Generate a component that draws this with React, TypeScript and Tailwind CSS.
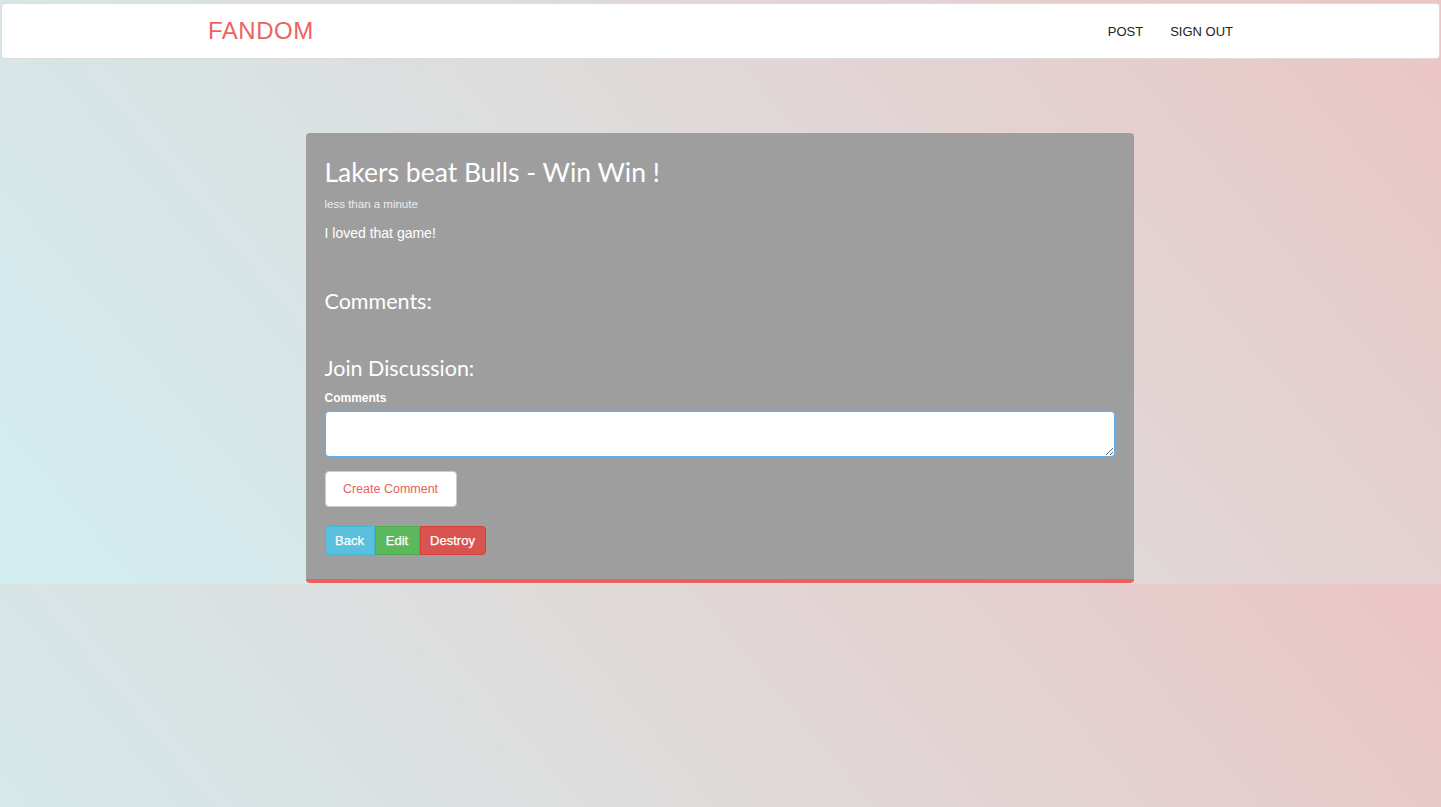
import React from "react";

export default function App() {
  return (
    <div
      className="min-h-[807px] w-full bg-[linear-gradient(50deg,#d1eef1,#dedcdc_50%,#ebc5c5)] bg-[length:100%_584px] bg-repeat-y pt-[3px]"
      style={{ fontFamily: '"Liberation Sans", Arial, sans-serif' }}
    >
      <nav className="ml-[1px] mr-[1px] h-[56px] rounded-[4px] border border-[#dcdcdc] bg-white flex items-center">
        <div className="w-[1439px] flex items-center justify-between pl-[206px] pr-[206px]">
          <span className="text-[24px] leading-none tracking-[0.5px] text-[#ee625f]">FANDOM</span>
          <div className="flex items-center gap-[27px] text-[13px] text-[#222] pt-[1px]">
            <span>POST</span>
            <span>SIGN OUT</span>
          </div>
        </div>
      </nav>

      <div className="flex justify-center pt-[74px]">
        <div className="ml-[-2px] w-[828px] rounded-[4px] border-b-[4px] border-[#ea605c] bg-[#9e9e9e] px-[19px] pt-[24px] pb-[24px]">
          <h1
            className="text-[26.5px] leading-[31px] text-white"
            style={{ fontFamily: "Lato, sans-serif" }}
          >
            Lakers beat Bulls - Win Win !
          </h1>
          <p className="mt-[8px] text-[11.5px] leading-[16px] text-[#ececec]">less than a minute</p>
          <p className="mt-[11px] text-[14px] leading-[20px] text-white">I loved that game!</p>

          <h3
            className="mt-[46px] text-[21.5px] leading-[24px] text-white"
            style={{ fontFamily: "Lato, sans-serif" }}
          >
            Comments:
          </h3>

          <h3
            className="mt-[43px] text-[21.5px] leading-[24px] text-white"
            style={{ fontFamily: "Lato, sans-serif" }}
          >
            Join Discussion:
          </h3>

          <label className="mt-[10px] block text-[12px] font-bold leading-[16px] text-white">Comments</label>
          <textarea className="mt-[5px] block h-[46px] w-full rounded-[4px] border border-[#66afe9] bg-white shadow-[0_0_4px_rgba(102,175,233,0.6)] outline-none" />

          <button className="mt-[14px] block h-[36px] w-[132px] rounded-[4px] border border-[#cccccc] bg-white text-[12.5px] text-[#ea605c]">
            Create Comment
          </button>

          <div className="mt-[19px] flex h-[29px] text-[13px] text-white [-webkit-text-stroke:0.25px_white]">
            <button className="w-[50px] rounded-l-[4px] border border-[#46b8da] bg-[#5bc0de]">Back</button>
            <button className="w-[45px] border border-[#4cae4c] bg-[#5cb85c]">Edit</button>
            <button className="w-[66px] rounded-r-[4px] border border-[#d43f3a] bg-[#d9534f]">Destroy</button>
          </div>
        </div>
      </div>
    </div>
  );
}
